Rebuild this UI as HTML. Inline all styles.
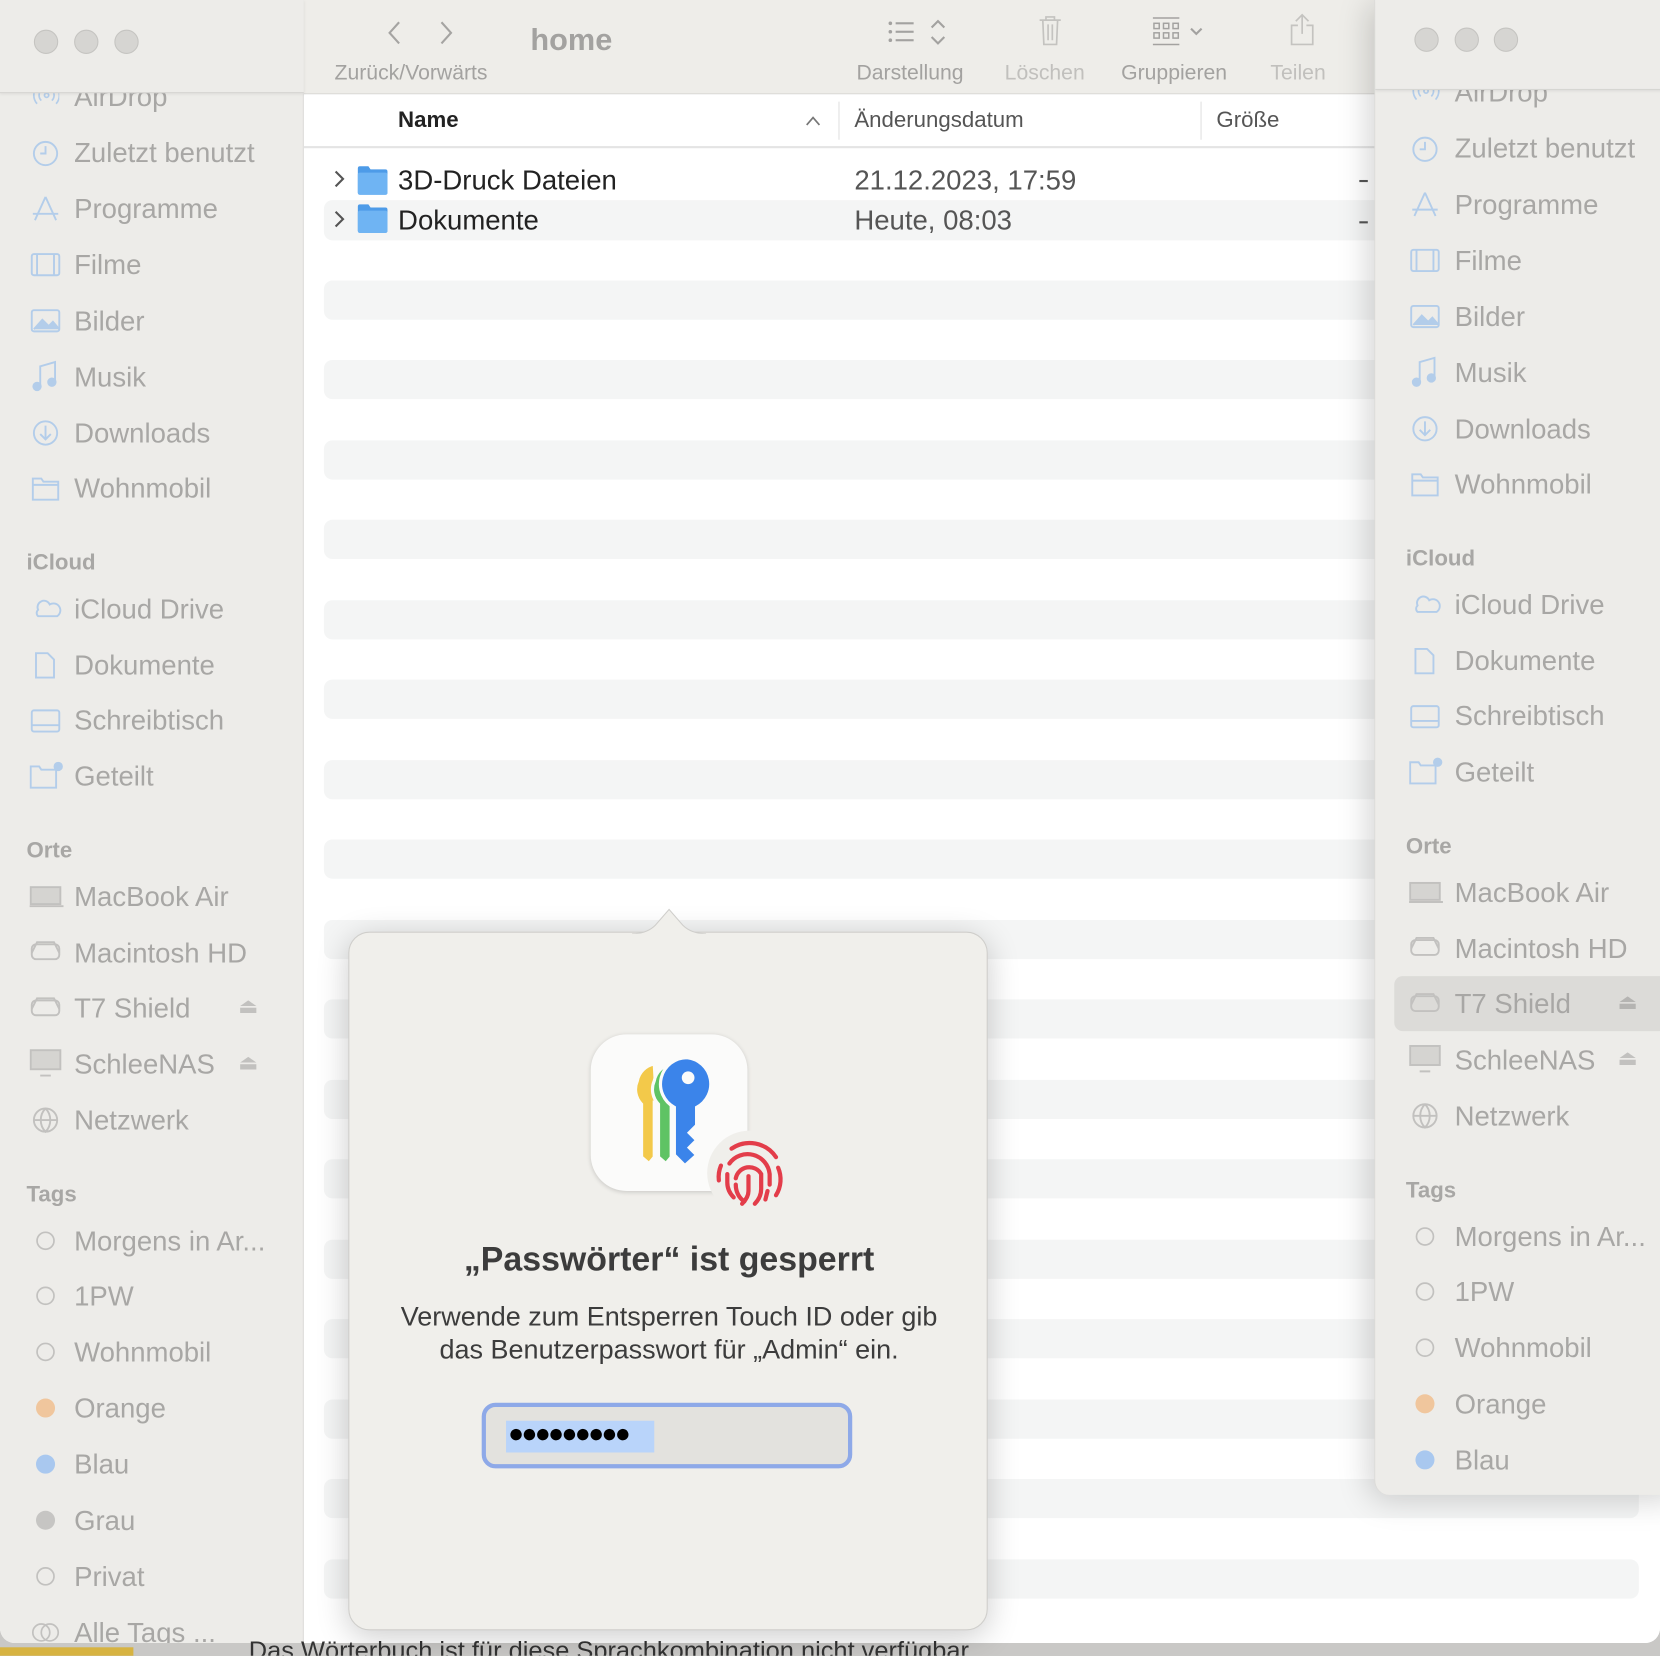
<!DOCTYPE html>
<html><head><meta charset="utf-8">
<style>
*{margin:0;padding:0;box-sizing:border-box}
html,body{width:1660px;height:1656px;overflow:hidden;background:#c9c8c6}
body{font-family:"Liberation Sans","DejaVu Sans",sans-serif}
#w{position:absolute;left:0;top:0;width:1568px;height:1564px;transform:scale(1.05867);transform-origin:0 0;overflow:hidden;background:#c9c8c6}
.win{position:absolute;left:0;top:0;width:1568px;height:1552px;background:#fff;border-radius:0 0 14px 14px;overflow:hidden}
.side{position:absolute;left:0;top:0;width:287px;height:1552px;background:#edece9;border-right:1px solid #dedddb}
.tb{position:absolute;left:0;top:0;width:287px;height:88px;background:#edece9;border-bottom:1px solid #d6d5d2;box-shadow:0 1px 3px rgba(0,0,0,.08);z-index:2}
.tl{position:absolute;width:23px;height:23px;border-radius:50%;background:#d6d5d2;border:1px solid #c5c4c1}
.it{position:absolute;font-size:26px;color:#a8a7a5;white-space:nowrap}
.hd{position:absolute;font-size:21px;font-weight:bold;color:#a8a7a5}
.ic{position:absolute;width:26px;height:22px}
.main{position:absolute;left:287px;top:0;width:1281px;height:1552px;background:#fff}
.mtb{position:absolute;left:0;top:0;width:1281px;height:89px;background:#eeede9;border-bottom:1px solid #dcdbd8}
.tlab{position:absolute;top:58px;font-size:20px;color:#a3a2a0}
.stripe{position:absolute;left:19px;width:1242px;height:37px;background:#f4f5f5;border-radius:8px}
.rp{position:absolute;left:1298px;top:0;width:290px;height:1412px;background:#edece9;border-radius:0 0 0 14px;box-shadow:-4px 4px 30px rgba(0,0,0,.18);border-left:1px solid #dcdbd8;overflow:hidden}
.pop{position:absolute;left:329px;top:880px;width:604px;height:660px;background:#f0efeb;border:1px solid #cfcecb;border-radius:20px;box-shadow:0 6px 30px rgba(0,0,0,.2)}
</style></head><body><div id="w">
<div class="win">
<div class="main">
 <div class="mtb">
  <svg style="position:absolute;left:78px;top:18px" width="80" height="26"><path d="M12 3 L3 13 L12 23" fill="none" stroke="#a5a4a2" stroke-width="2"/><path d="M52 3 L61 13 L52 23" fill="none" stroke="#a5a4a2" stroke-width="2"/></svg>
  <div style="position:absolute;left:214px;top:22px;font-size:29px;font-weight:bold;color:#a3a2a0">home</div>
  <div class="tlab" style="left:29px">Zurück/Vorwärts</div>
  <svg style="position:absolute;left:551px;top:17px" width="60" height="28"><g fill="#a3a2a0"><circle cx="3" cy="5" r="1.7"/><circle cx="3" cy="13" r="1.7"/><circle cx="3" cy="21" r="1.7"/><rect x="8" y="4" width="17" height="2"/><rect x="8" y="12" width="17" height="2"/><rect x="8" y="20" width="17" height="2"/></g><path d="M42 9 L48 3 L54 9 M42 18 L48 24 L54 18" fill="none" stroke="#a3a2a0" stroke-width="2"/></svg>
  <div class="tlab" style="left:522px">Darstellung</div>
  <svg style="position:absolute;left:693px;top:14px" width="24" height="30"><path d="M2 5 H22 M8 5 V2 H16 V5 M5 5 L6 28 H18 L19 5 M10 9 V24 M14 9 V24" fill="none" stroke="#c4c3c0" stroke-width="1.6"/></svg>
  <div class="tlab" style="left:662px;color:#c1c0bd">Löschen</div>
  <svg style="position:absolute;left:800px;top:15px" width="60" height="30"><g fill="none" stroke="#a3a2a0" stroke-width="1.4"><path d="M2 2 H27 M2 27 H27"/><rect x="3" y="7" width="5" height="5"/><rect x="12" y="7" width="5" height="5"/><rect x="21" y="7" width="5" height="5"/><rect x="3" y="16" width="5" height="5"/><rect x="12" y="16" width="5" height="5"/><rect x="21" y="16" width="5" height="5"/></g><path d="M38 12 L43 17 L48 12" fill="none" stroke="#a3a2a0" stroke-width="2"/></svg>
  <div class="tlab" style="left:772px">Gruppieren</div>
  <svg style="position:absolute;left:930px;top:12px" width="26" height="32"><path d="M13 2 V20 M7 8 L13 2 L19 8 M9 12 H3 V30 H23 V12 H17" fill="none" stroke="#c4c3c0" stroke-width="1.6"/></svg>
  <div class="tlab" style="left:913px;color:#c1c0bd">Teilen</div>
 </div>
 <div style="position:absolute;left:0;top:90px;width:1281px;height:50px;background:#fff;border-bottom:2px solid #e4e4e4"></div>
 <div style="position:absolute;left:89px;top:102px;font-size:21px;font-weight:bold;color:#222">Name</div>
 <svg style="position:absolute;left:473px;top:108px" width="16" height="12"><path d="M2 10 L8 3 L14 10" fill="none" stroke="#777" stroke-width="1.6"/></svg>
 <div style="position:absolute;left:505px;top:96px;width:1px;height:36px;background:#e0e0e0"></div>
 <div style="position:absolute;left:520px;top:102px;font-size:21px;color:#555">Änderungsdatum</div>
 <div style="position:absolute;left:847px;top:96px;width:1px;height:36px;background:#e0e0e0"></div>
 <div style="position:absolute;left:862px;top:102px;font-size:21px;color:#555">Größe</div>
 <div style="position:absolute;left:19px;top:189px;width:1242px;height:38px;background:#f4f5f5;border-radius:8px"></div>
 <svg style="position:absolute;left:27px;top:158px" width="14" height="60"><path d="M3 4 L10 11 L3 18 M3 42 L10 49 L3 56" fill="none" stroke="#555" stroke-width="2"/></svg>
 <svg style="position:absolute;left:50px;top:156px" width="30" height="70"><g><path d="M1 3 Q1 1 3 1 H11 L13 4 H27 Q29 4 29 6 V26 Q29 28 27 28 H3 Q1 28 1 26Z" fill="#4d9be8"/><rect x="1" y="7" width="28" height="21" rx="2" fill="#6fb4f3"/><path d="M1 39 Q1 37 3 37 H11 L13 40 H27 Q29 40 29 42 V62 Q29 64 27 64 H3 Q1 64 1 62Z" fill="#4d9be8"/><rect x="1" y="43" width="28" height="21" rx="2" fill="#6fb4f3"/></g></svg>
 <div style="position:absolute;left:89px;top:155px;font-size:26px;color:#222">3D-Druck Dateien</div>
 <div style="position:absolute;left:89px;top:193px;font-size:26px;color:#222">Dokumente</div>
 <div style="position:absolute;left:520px;top:155px;font-size:26px;color:#555">21.12.2023, 17:59</div>
 <div style="position:absolute;left:520px;top:193px;font-size:26px;color:#555">Heute, 08:03</div>
 <div style="position:absolute;left:997px;top:170px;width:8px;height:2px;background:#555"></div>
 <div style="position:absolute;left:997px;top:209px;width:8px;height:2px;background:#555"></div>
 <div class="stripe" style="top:265px"></div><div class="stripe" style="top:340px"></div><div class="stripe" style="top:416px"></div><div class="stripe" style="top:491px"></div><div class="stripe" style="top:567px"></div><div class="stripe" style="top:642px"></div><div class="stripe" style="top:718px"></div><div class="stripe" style="top:793px"></div><div class="stripe" style="top:869px"></div><div class="stripe" style="top:944px"></div><div class="stripe" style="top:1020px"></div><div class="stripe" style="top:1095px"></div><div class="stripe" style="top:1171px"></div><div class="stripe" style="top:1246px"></div><div class="stripe" style="top:1322px"></div><div class="stripe" style="top:1397px"></div><div class="stripe" style="top:1473px"></div>
</div>
<div class="side">
 <div class="it" style="left:70px;top:76px">AirDrop</div>
 <svg class="ic" style="left:30px;top:80px" width="28" height="22"><g fill="none" stroke="#b3cdea" stroke-width="1.6"><circle cx="14" cy="10" r="2"/><path d="M9 5 A7 7 0 0 0 9 15 M19 5 A7 7 0 0 1 19 15 M5 2 A12 12 0 0 0 5 18 M23 2 A12 12 0 0 1 23 18"/></g></svg>
 <div class="tb"><div class="tl" style="left:32px;top:28px"></div><div class="tl" style="left:70px;top:28px"></div><div class="tl" style="left:108px;top:28px"></div></div>
 <svg style="position:absolute;left:28px;top:130px" width="32" height="1430"><g fill="none" stroke="#b3cdea" stroke-width="1.8">
  <circle cx="15" cy="15" r="11"/><path d="M15 8 V15 H10"/>
  <path d="M15 56 L5 78 M15 56 L25 78 M3 72 H27"/>
  <rect x="2" y="110" width="26" height="20" rx="2"/><path d="M7 110 V130 M23 110 V130"/>
  <rect x="2" y="163" width="26" height="20" rx="2"/><path d="M4 181 L12 172 L18 178 L22 174 L28 181" fill="#b3cdea"/>
  <path d="M10 235 V216 L24 212 V230"/><circle cx="7" cy="235" r="3.5" fill="#b3cdea"/><circle cx="21" cy="231" r="3.5" fill="#b3cdea"/>
  <circle cx="15" cy="279" r="11"/><path d="M15 272 V285 M10 280 L15 285 L20 280"/>
  <path d="M3 322 H11 L13 325 H27 V342 H3Z M3 328 H27"/>
  <path d="M8 446 A6 6 0 0 1 19 441 A6 6 0 0 1 26 452 H8 A4 4 0 0 1 8 446Z"/>
  <path d="M6 487 H17 L23 493 V510 H6Z"/>
  <rect x="2" y="541" width="26" height="20" rx="2"/><path d="M2 555 H28"/>
  <path d="M1 594 H9 L11 597 H25 V614 H1Z"/><circle cx="27" cy="594" r="3.5" fill="#b3cdea"/>
 </g><g fill="none" stroke="#c2c1bf" stroke-width="1.8">
  <rect x="1" y="708" width="28" height="16" fill="#d5d4d1"/><path d="M-2 726 H32"/>
  <rect x="2" y="762" width="26" height="14" rx="4"/><path d="M2 770 L7 760 H23 L28 770"/>
  <rect x="2" y="815" width="26" height="14" rx="4"/><path d="M2 823 L7 813 H23 L28 823"/>
  <rect x="1" y="862" width="28" height="18" fill="#d5d4d1"/><path d="M10 886 H20"/>
  <circle cx="15" cy="928" r="11"/><path d="M4 928 H26 M15 917 C9 923 9 933 15 939 C21 933 21 923 15 917"/>
 </g><g fill="none" stroke="#c2c1bf" stroke-width="1.6">
  <circle cx="15" cy="1042" r="8"/><circle cx="15" cy="1094" r="8"/><circle cx="15" cy="1147" r="8"/>
  <circle cx="15" cy="1359" r="8"/><circle cx="11" cy="1412" r="8"/><circle cx="19" cy="1412" r="8"/>
 </g>
 <circle cx="15" cy="1200" r="9" fill="#f0c69d"/><circle cx="15" cy="1253" r="9" fill="#a9c8ef"/><circle cx="15" cy="1306" r="9" fill="#c6c5c3"/>
 </svg>
 <div class="it" style="left:70px;top:129px">Zuletzt benutzt</div>
 <div class="it" style="left:70px;top:182px">Programme</div>
 <div class="it" style="left:70px;top:235px">Filme</div>
 <div class="it" style="left:70px;top:288px">Bilder</div>
 <div class="it" style="left:70px;top:341px">Musik</div>
 <div class="it" style="left:70px;top:394px">Downloads</div>
 <div class="it" style="left:70px;top:446px">Wohnmobil</div>
 <div class="hd" style="left:25px;top:520px">iCloud</div>
 <div class="it" style="left:70px;top:560px">iCloud Drive</div>
 <div class="it" style="left:70px;top:613px">Dokumente</div>
 <div class="it" style="left:70px;top:665px">Schreibtisch</div>
 <div class="it" style="left:70px;top:718px">Geteilt</div>
 <div class="hd" style="left:25px;top:792px">Orte</div>
 <div class="it" style="left:70px;top:832px">MacBook Air</div>
 <div class="it" style="left:70px;top:885px">Macintosh HD</div>
 <div class="it" style="left:70px;top:937px">T7 Shield</div>
 <div class="it" style="left:70px;top:990px">SchleeNAS</div>
 <div class="it" style="left:70px;top:1043px">Netzwerk</div>
 <div class="it" style="left:225px;top:938px;font-size:20px;color:#c2c1bf">⏏</div>
 <div class="it" style="left:225px;top:991px;font-size:20px;color:#c2c1bf">⏏</div>
 <div class="hd" style="left:25px;top:1117px">Tags</div>
 <div class="it" style="left:70px;top:1157px">Morgens in Ar...</div>
 <div class="it" style="left:70px;top:1209px">1PW</div>
 <div class="it" style="left:70px;top:1262px">Wohnmobil</div>
 <div class="it" style="left:70px;top:1315px">Orange</div>
 <div class="it" style="left:70px;top:1368px">Blau</div>
 <div class="it" style="left:70px;top:1421px">Grau</div>
 <div class="it" style="left:70px;top:1474px">Privat</div>
 <div class="it" style="left:70px;top:1527px">Alle Tags ...</div>
</div>
</div>
<div style="position:absolute;left:0;top:1556px;width:126px;height:10px;background:#d7b341"></div>
<div style="position:absolute;left:235px;top:1546px;font-size:24px;color:#333;white-space:nowrap">Das Wörterbuch ist für diese Sprachkombination nicht verfügbar</div>

<div class="rp">
 <div class="it" style="left:75px;top:72px">AirDrop</div>
 <svg style="position:absolute;left:34px;top:76px" width="28" height="22"><g fill="none" stroke="#b3cdea" stroke-width="1.6"><circle cx="14" cy="10" r="2"/><path d="M9 5 A7 7 0 0 0 9 15 M19 5 A7 7 0 0 1 19 15 M5 2 A12 12 0 0 0 5 18 M23 2 A12 12 0 0 1 23 18"/></g></svg>
 <div style="position:absolute;left:0;top:0;width:290px;height:85px;background:#edece9;border-bottom:1px solid #d6d5d2;box-shadow:0 1px 3px rgba(0,0,0,.08)">
  <div class="tl" style="left:37px;top:26px"></div><div class="tl" style="left:75px;top:26px"></div><div class="tl" style="left:112px;top:26px"></div></div>
 <div style="position:absolute;left:18px;top:922px;width:260px;height:52px;background:#dcdbd8;border-radius:8px"></div>
 <svg style="position:absolute;left:32px;top:126px" width="32" height="1430"><g fill="none" stroke="#b3cdea" stroke-width="1.8">
  <circle cx="15" cy="15" r="11"/><path d="M15 8 V15 H10"/>
  <path d="M15 56 L5 78 M15 56 L25 78 M3 72 H27"/>
  <rect x="2" y="110" width="26" height="20" rx="2"/><path d="M7 110 V130 M23 110 V130"/>
  <rect x="2" y="163" width="26" height="20" rx="2"/><path d="M4 181 L12 172 L18 178 L22 174 L28 181" fill="#b3cdea"/>
  <path d="M10 235 V216 L24 212 V230"/><circle cx="7" cy="235" r="3.5" fill="#b3cdea"/><circle cx="21" cy="231" r="3.5" fill="#b3cdea"/>
  <circle cx="15" cy="279" r="11"/><path d="M15 272 V285 M10 280 L15 285 L20 280"/>
  <path d="M3 322 H11 L13 325 H27 V342 H3Z M3 328 H27"/>
  <path d="M8 446 A6 6 0 0 1 19 441 A6 6 0 0 1 26 452 H8 A4 4 0 0 1 8 446Z"/>
  <path d="M6 487 H17 L23 493 V510 H6Z"/>
  <rect x="2" y="541" width="26" height="20" rx="2"/><path d="M2 555 H28"/>
  <path d="M1 594 H9 L11 597 H25 V614 H1Z"/><circle cx="27" cy="594" r="3.5" fill="#b3cdea"/>
 </g><g fill="none" stroke="#c2c1bf" stroke-width="1.8">
  <rect x="1" y="708" width="28" height="16" fill="#d5d4d1"/><path d="M-2 726 H32"/>
  <rect x="2" y="762" width="26" height="14" rx="4"/><path d="M2 770 L7 760 H23 L28 770"/>
  <rect x="2" y="815" width="26" height="14" rx="4"/><path d="M2 823 L7 813 H23 L28 823"/>
  <rect x="1" y="862" width="28" height="18" fill="#d5d4d1"/><path d="M10 886 H20"/>
  <circle cx="15" cy="928" r="11"/><path d="M4 928 H26 M15 917 C9 923 9 933 15 939 C21 933 21 923 15 917"/>
 </g><g fill="none" stroke="#c2c1bf" stroke-width="1.6">
  <circle cx="15" cy="1042" r="8"/><circle cx="15" cy="1094" r="8"/><circle cx="15" cy="1147" r="8"/>
 </g>
 <circle cx="15" cy="1200" r="9" fill="#f0c69d"/><circle cx="15" cy="1253" r="9" fill="#a9c8ef"/>
 </svg>
 <div class="it" style="left:75px;top:125px">Zuletzt benutzt</div>
 <div class="it" style="left:75px;top:178px">Programme</div>
 <div class="it" style="left:75px;top:231px">Filme</div>
 <div class="it" style="left:75px;top:284px">Bilder</div>
 <div class="it" style="left:75px;top:337px">Musik</div>
 <div class="it" style="left:75px;top:390px">Downloads</div>
 <div class="it" style="left:75px;top:442px">Wohnmobil</div>
 <div class="hd" style="left:29px;top:516px">iCloud</div>
 <div class="it" style="left:75px;top:556px">iCloud Drive</div>
 <div class="it" style="left:75px;top:609px">Dokumente</div>
 <div class="it" style="left:75px;top:661px">Schreibtisch</div>
 <div class="it" style="left:75px;top:714px">Geteilt</div>
 <div class="hd" style="left:29px;top:788px">Orte</div>
 <div class="it" style="left:75px;top:828px">MacBook Air</div>
 <div class="it" style="left:75px;top:881px">Macintosh HD</div>
 <div class="it" style="left:75px;top:933px">T7 Shield</div>
 <div class="it" style="left:75px;top:986px">SchleeNAS</div>
 <div class="it" style="left:75px;top:1039px">Netzwerk</div>
 <div class="it" style="left:229px;top:934px;font-size:20px;color:#b5b4b2">⏏</div>
 <div class="it" style="left:229px;top:987px;font-size:20px;color:#c2c1bf">⏏</div>
 <div class="hd" style="left:29px;top:1113px">Tags</div>
 <div class="it" style="left:75px;top:1153px">Morgens in Ar...</div>
 <div class="it" style="left:75px;top:1205px">1PW</div>
 <div class="it" style="left:75px;top:1258px">Wohnmobil</div>
 <div class="it" style="left:75px;top:1311px">Orange</div>
 <div class="it" style="left:75px;top:1364px">Blau</div>
</div>

<div class="pop">
 <svg style="position:absolute;left:267px;top:-25px" width="70" height="27"><path d="M0 26 Q14 26 22 18 L35 3 L48 18 Q56 26 70 26" fill="#f0efeb" stroke="#cfcecb" stroke-width="1"/><rect x="0" y="26" width="70" height="2" fill="#f0efeb"/></svg>
 <div style="position:absolute;left:228px;top:96px;width:148px;height:148px;background:#fbfbfa;border-radius:34px;box-shadow:0 1px 4px rgba(0,0,0,.15)"></div>
 <svg style="position:absolute;left:250px;top:110px" width="110" height="120">
  <g stroke="#fbfbfa" stroke-width="3">
  <path d="M22 30 A20 20 0 0 1 38 14 L40 50 L38 50 V102 L33 108 L26 102 V52 A20 20 0 0 1 22 30Z" fill="#f3c94a"/>
  <path d="M38 30 A20 20 0 0 1 54 14 L56 50 L54 50 V102 L49 108 L42 102 V52 A20 20 0 0 1 38 30Z" fill="#5fc364"/>
  <path d="M69 8 A25 25 0 0 0 57 55 V100 L67 110 L78 100 L71 93 L78 86 L71 79 L78 72 V55 A25 25 0 0 0 69 8Z" fill="#3b84ea"/>
  </g>
  <circle cx="70" cy="27" r="6" fill="#fbfbfa"/>
 </svg>
 <div style="position:absolute;left:338px;top:187px;width:80px;height:80px;border-radius:50%;background:#f0efeb"></div>
 <svg style="position:absolute;left:343px;top:192px" width="70" height="70"><g fill="none" stroke="#e33d4a" stroke-width="4" stroke-linecap="round">
  <path d="M18 12 A30 30 0 0 1 60 20"/><path d="M8 28 A28 28 0 0 0 6 42"/><path d="M62 30 A28 28 0 0 1 60 56"/>
  <path d="M16 26 A21 21 0 0 1 54 36 V46"/><path d="M14 36 V44 Q14 52 20 58"/>
  <path d="M22 40 A13 13 0 0 1 46 36 V50 Q46 58 40 64"/><path d="M22 46 Q22 56 30 62"/>
  <path d="M34 38 V52 Q34 58 28 64"/><path d="M52 52 L50 60"/>
 </g></svg>
 <div style="position:absolute;left:0;width:604px;top:290px;text-align:center;font-size:32px;font-weight:bold;color:#3c3c3c">„Passwörter“ ist gesperrt</div>
 <div style="position:absolute;left:0;width:604px;top:348px;text-align:center;font-size:25.5px;line-height:31px;color:#3c3c3c">Verwende zum Entsperren Touch ID oder gib<br>das Benutzerpasswort für „Admin“ ein.</div>
 <div style="position:absolute;left:125px;top:444px;width:350px;height:62px;border:4px solid #8ea9e8;border-radius:13px;background:#e3e2de">
  <div style="position:absolute;left:19px;top:13px;width:140px;height:30px;background:#b9d4fa"></div>
  <div style="position:absolute;left:21px;top:11px;font-size:25px;letter-spacing:-2.5px;color:#000">●●●●●●●●●</div>
 </div>
</div>
</div></body></html>
